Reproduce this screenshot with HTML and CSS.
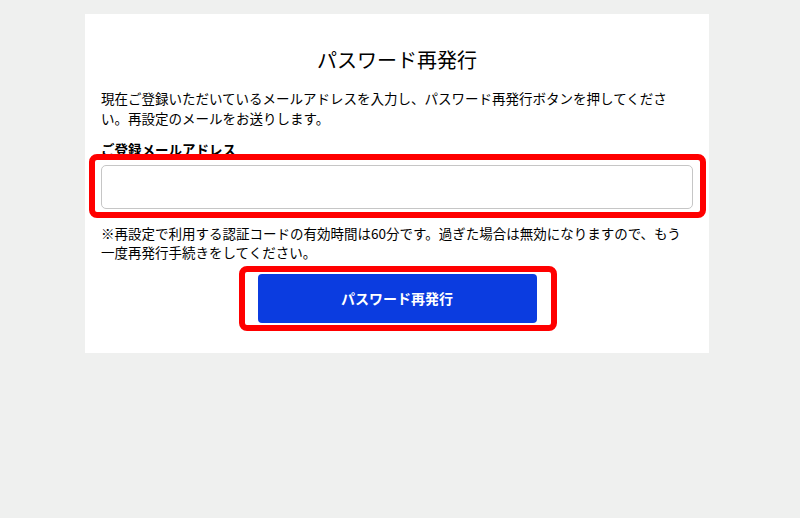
FILE: index.html
```html
<!DOCTYPE html>
<html lang="ja">
<head>
<meta charset="utf-8">
<title>パスワード再発行</title>
<link rel="stylesheet" href="styles.css">
</head>
<body>
<main class="card">
  <h1 class="title">パスワード再発行</h1>
  <p class="lead">現在ご登録いただいているメールアドレスを入力し、パスワード再発行ボタンを押してください。再設定のメールをお送りします。</p>
  <label class="label" for="email">ご登録メールアドレス</label>
  <div class="field">
    <input class="input" id="email" type="email">
    <span class="mark mark-field"></span>
  </div>
  <p class="note">※再設定で利用する認証コードの有効時間は60分です。過ぎた場合は無効になりますので、もう一度再発行手続きをしてください。</p>
  <div class="actions">
    <div class="btn-wrap">
      <button class="btn" type="button">パスワード再発行</button>
      <span class="mark mark-btn"></span>
    </div>
  </div>
</main>
</body>
</html>
```
FILE: styles.css
```css
html, body {
  margin: 0;
  padding: 0;
}
body {
  background: #eff0ef;
  font-family: "Noto Sans CJK JP", "Noto Sans", sans-serif;
  color: #000;
  width: 800px;
  height: 518px;
}
.card {
  display: block;
  box-sizing: border-box;
  width: 624px;
  margin: 14px 0 0 85px;
  background: #ffffff;
  padding: 32px 16px 30px 16px;
}
.title {
  margin: 0;
  font-size: 20px;
  line-height: 28px;
  font-weight: 400;
  text-align: center;
  color: #000;
}
.lead {
  margin: 15px 0 0 0;
  font-size: 13.5px;
  line-height: 19.5px;
}
.label {
  display: block;
  margin-top: 12px;
  font-size: 13.5px;
  line-height: 19.5px;
  font-weight: 700;
}
.field {
  position: relative;
  margin-top: 5px;
}
.input {
  display: block;
  box-sizing: border-box;
  width: 592px;
  height: 44px;
  margin: 0;
  border: 1px solid #c6c6c6;
  border-radius: 5px;
  background: #fff;
  font: inherit;
}
.note {
  margin: 15px 0 0 0;
  font-size: 13.5px;
  line-height: 19.5px;
}
.actions {
  display: flex;
  justify-content: center;
  margin-top: 11px;
}
.btn-wrap {
  position: relative;
}
.btn {
  display: block;
  width: 279px;
  height: 49px;
  border: none;
  border-radius: 4px;
  background: #0b3ce0;
  color: #ffffff;
  font-family: "Noto Sans CJK JP", "Noto Sans", sans-serif;
  font-size: 14px;
  font-weight: 700;
  padding: 0;
}
.mark {
  position: absolute;
  box-sizing: border-box;
  border: 6px solid #ff0000;
  border-radius: 8px;
  pointer-events: none;
}
.mark-field {
  left: -12px;
  right: -13px;
  top: -11px;
  bottom: -9px;
}
.mark-btn {
  left: -19px;
  right: -20px;
  top: -8px;
  bottom: -8px;
}
```
